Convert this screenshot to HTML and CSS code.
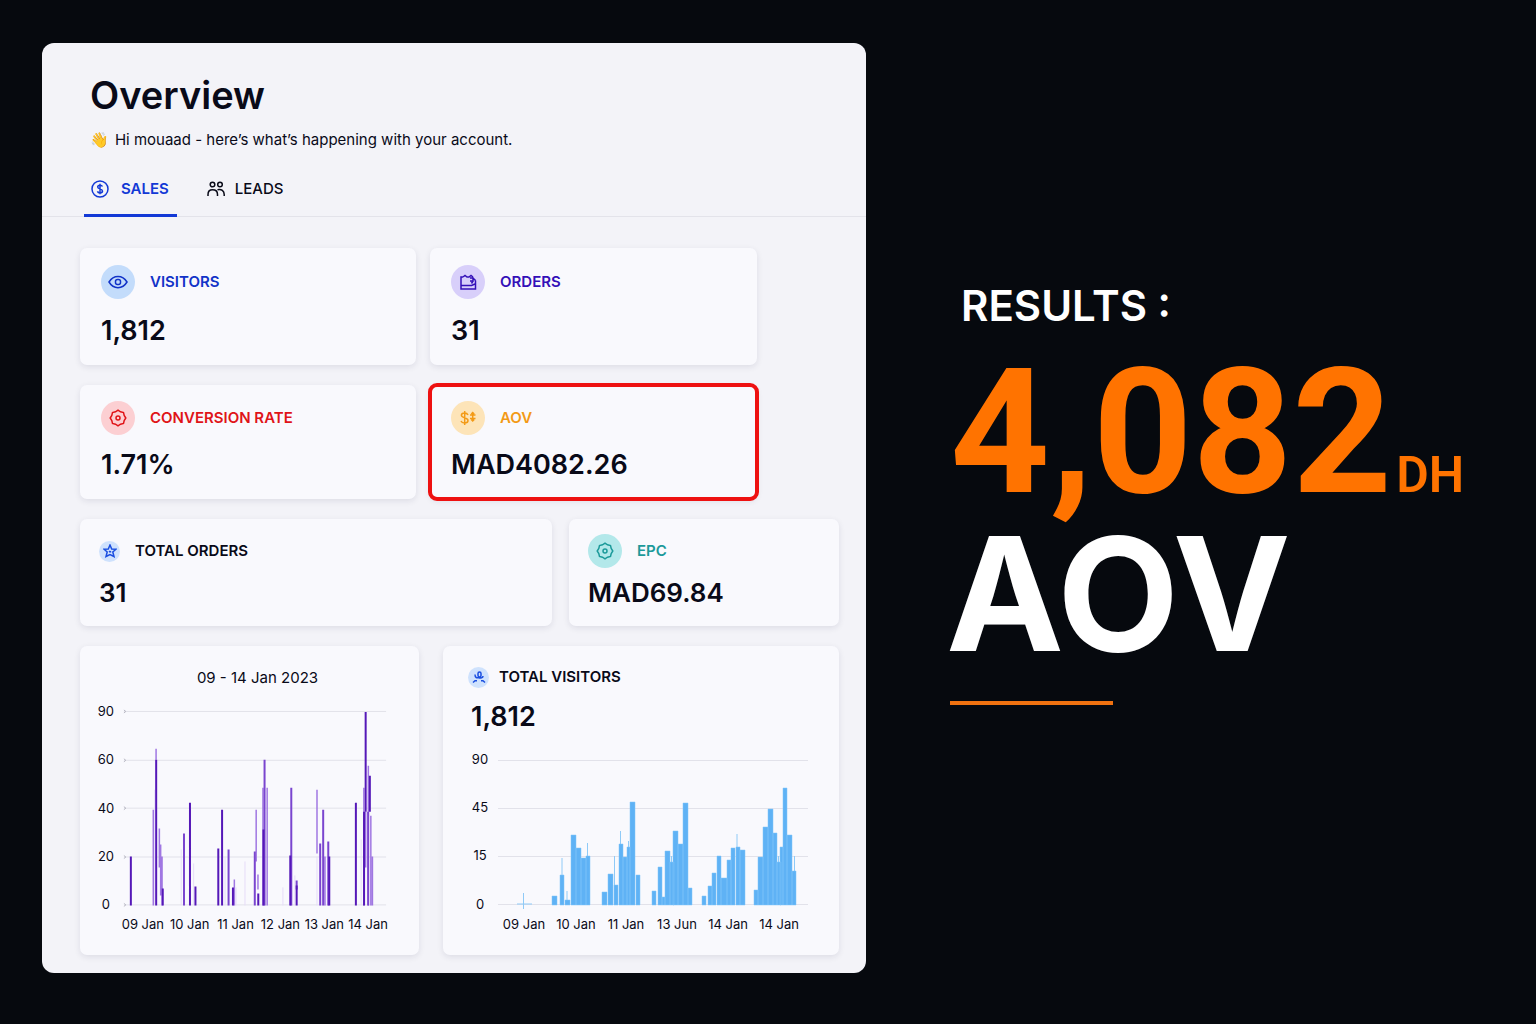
FILE: index.html
```html
<!DOCTYPE html>
<html lang="en">

<head>
    <meta charset="utf-8">
    <title>Overview</title>
    <link rel="stylesheet" href="styles.css">
</head>

<body>
    <main class="dashboard">
        <header class="dashboard-header">
            <h1>Overview</h1>
            <p class="greeting"><span class="wave">👋</span> Hi mouaad - here’s what’s happening with your account.</p>
        </header>

        <nav class="tabs">
            <button class="tab active" type="button">
                <svg width="18" height="18" viewBox="0 0 18 18">
                    <circle cx="9" cy="9" r="8" />
                    <path d="M11.5 6.5C11 5.5 10.2 5.200 9 5.200C7.600 5.200 6.700 5.900 6.700 7C6.700 9.500 11.500 8.300 11.500 11C11.500 12.200 10.500 12.900 9 12.900C7.700 12.900 6.800 12.300 6.400 11.400M9 3.700V14.300" />
                </svg>
                SALES
            </button>
            <button class="tab" type="button">
                <svg width="18" height="18" viewBox="0 0 18 18">
                    <circle cx="5.500" cy="4.500" r="2.300" />
                    <circle cx="13" cy="4.500" r="2.300" />
                    <path d="M1 16V14.500C1 11.500 2.800 9.800 5.500 9.800C8.500 9.800 10.500 11.500 10.500 14.500V16M10.500 9.800C14.500 8.800 17.200 11 17.200 14.500V16" />
                </svg>
                LEADS
            </button>
        </nav>

        <div class="content">
            <div class="row row-top">
                <section class="card">
                    <div class="card-head blue">
                        <span class="icon">
                            <svg width="20" height="14" viewBox="0 0 20 14">
                                <path d="M1 7C5.500 -0.500 14.500 -0.500 19 7C14.500 14.500 5.500 14.500 1 7Z" />
                                <rect x="7.500" y="4.500" width="5" height="5" rx="2" />
                            </svg>
                        </span>
                        <h2>VISITORS</h2>
                    </div>
                    <p class="value">1,812</p>
                </section>
                <section class="card">
                    <div class="card-head purple">
                        <span class="icon">
                            <svg width="18" height="18" viewBox="0 0 18 18">
                                <path d="M4 4H2V16H16.500V7.500M2 12.500H12.500L16 11M4 4L6 2.500L8 4H10L12 2.500L14 4M11 5H14V8H11M14 8L12.500 10.500M14 5L16.500 7.500" />
                            </svg>
                        </span>
                        <h2>ORDERS</h2>
                    </div>
                    <p class="value">31</p>
                </section>
            </div>

            <div class="row row-middle">
                <section class="card">
                    <div class="card-head red">
                        <span class="icon">
                            <svg width="18" height="18" viewBox="0 0 18 18">
                                <path d="M9 1.200L11.500 2.800L14.500 3.500L15.200 6.500L16.800 9L15.200 11.500L14.500 14.500L11.500 15.200L9 16.800L6.500 15.200L3.500 14.500L2.800 11.500L1.200 9L2.800 6.500L3.500 3.500L6.500 2.800Z" />
                                <circle cx="9" cy="9" r="2" />
                            </svg>
                        </span>
                        <h2>CONVERSION RATE</h2>
                    </div>
                    <p class="value">1.71%</p>
                </section>
                <section class="card highlighted">
                    <div class="card-head orange">
                        <span class="icon">
                            <svg width="18" height="18" viewBox="0 0 18 18">
                                <path d="M9 6C8.500 4.800 7.200 4 5.500 4C3.500 4 2.400 5 2.400 6.300C2.400 9.500 9 8 9 11.500C9 13 7.500 14 5.500 14C3.700 14 2.500 13.200 2 12M5.700 2V16M11 6H16.500M11 9.500H16.500M13.700 3.500V12M12.300 5L13.700 3.500L15.200 5M12.300 10.500L13.700 12L15.200 10.500" />
                            </svg>
                        </span>
                        <h2>AOV</h2>
                    </div>
                    <p class="value">MAD4082.26</p>
                </section>
            </div>

            <div class="row row-totals">
                <section class="card">
                    <div class="card-head dark">
                        <span class="icon icon-small">
                            <svg width="14" height="14" viewBox="0 0 14 14">
                                <path d="M7 1L8.700 5L13 5.200L9.800 8L11 12.500L7 10.500L3 12.500L4.200 8L1 5.200L5.300 5ZM6 7.200L7 8L8.200 7.500" />
                            </svg>
                        </span>
                        <h2>TOTAL ORDERS</h2>
                    </div>
                    <p class="value">31</p>
                </section>
                <section class="card">
                    <div class="card-head teal">
                        <span class="icon">
                            <svg width="18" height="18" viewBox="0 0 18 18">
                                <path d="M9 1.200L11.500 2.800L14.500 3.500L15.200 6.500L16.800 9L15.200 11.500L14.500 14.500L11.500 15.200L9 16.800L6.500 15.200L3.500 14.500L2.800 11.500L1.200 9L2.800 6.500L3.500 3.500L6.500 2.800Z" />
                                <circle cx="9" cy="9" r="2" />
                            </svg>
                        </span>
                        <h2>EPC</h2>
                    </div>
                    <p class="value">MAD69.84</p>
                </section>
            </div>

            <div class="row row-charts">
                <section class="card chart-card">
                    <p class="chart-title">09 - 14 Jan 2023</p>
                    <svg class="chart" viewBox="80 696 340 244">
                        <path class="grid" d="M124 711.500H387M124 760.500H387M124 808.500H387M124 857.500H387M124 905.500H387" />
                        <path class="tick" d="M124 710L126 711.500L124 713M124 759L126 760.500L124 762M124 807L126 808.500L124 810M124 856L126 857.500L124 859M124 904L126 905.500L124 907" />
                        <g class="axis">
                            <text x="106" y="716">90</text>
                            <text x="106" y="764">60</text>
                            <text x="106" y="813">40</text>
                            <text x="106" y="861">20</text>
                            <text x="106" y="910">0</text>
                            <text x="143" y="930">09 Jan</text>
                            <text x="190" y="930">10 Jan</text>
                            <text x="236" y="930">11 Jan</text>
                            <text x="281" y="930">12 Jan</text>
                            <text x="325" y="930">13 Jan</text>
                            <text x="369" y="930">14 Jan</text>
                        </g>
                        <path class="bar-faint" d="M155 906V790M181.500 906V850M194 906V864M225.500 906V857M236.500 906V888M245.500 906V862M283.500 906V888M295.500 906V876M317.700 906V857M362 906V840" />
                        <path class="bar-light" d="M153.500 906V810M156.300 760V749M159.600 868V829M160.900 896V845M162.300 906V857M234.800 906V880M256.700 862V810M258.500 890V875M263.500 906V788M267.700 906V788M317.700 854V790M325.700 906V857M364.700 906V788M366.500 868V812M369.200 906V766M371.700 906V816M373.300 906V857" />
                        <path class="bar-mid" d="M184.300 906V834M229 906V850M255.300 906V852M265.100 906V760M291.900 906V788M297.300 890V881M320.900 906V844M323.900 906V810M329 906V842M369 906V812" />
                        <path class="bar-dark" d="M131 906V857M156.400 906V760M163 906V889M190.300 906V803M195.800 906V887M218.700 906V849M222.500 906V810M233.400 906V888M258.800 906V894M264 906V830M290.900 906V856M297.300 906V886M330 906V857M356.700 906V803M364.900 906V812M366.500 812V712M370.700 812V776" />
                    </svg>
                </section>

                <section class="card chart-card visitors-card">
                    <div class="card-head dark">
                        <span class="icon icon-small">
                            <svg width="14" height="14" viewBox="0 0 14 14">
                                <path d="M6 5.500V3.500C6 1.500 9 1.500 9 3.500V5.500C9 7.500 6 7.500 6 5.500M3 4.500C3 8 5 8 6.500 7.500C8.500 8.500 11 8 11 6M1 12.500L3 10.800H5M9 10.800H11L13 12.500" />
                            </svg>
                        </span>
                        <h2>TOTAL VISITORS</h2>
                    </div>
                    <p class="value">1,812</p>
                    <svg class="chart" viewBox="443 740 396 200">
                        <path class="grid" d="M498 761.500H808M498 809.500H808M498 857.500H808M498 905.500H808" />
                        <g class="axis">
                            <text x="480" y="765">90</text>
                            <text x="480" y="813">45</text>
                            <text x="480" y="861">15</text>
                            <text x="480" y="910">0</text>
                            <text x="524" y="930">09 Jan</text>
                            <text x="576" y="930">10 Jan</text>
                            <text x="626" y="930">11 Jan</text>
                            <text x="677" y="930">13 Jun</text>
                            <text x="728" y="930">14 Jan</text>
                            <text x="779" y="930">14 Jan</text>
                        </g>
                        <path class="spike" d="M517 905H532M523.500 910V894M562 880V859M567 902V892M587.500 857V844M614.500 886V857M620.500 846V832M628.500 849V842M671.500 864V857M737 849V835M778.500 864V857M786.500 850V820M794.500 873V857" />
                        <path class="visits" d="M552 906V897H557V906ZM560 906V876H564V906ZM565 906V901H570V906ZM571 906V836H576V906ZM576 906V849H581V906ZM581 906V859H586V906ZM586 906V857H590V906Z
                            M602 906V893H607V906ZM608 906V875H613V906ZM614 906V886H618V906ZM619 906V845H623V906ZM623 906V858H627V906ZM627 906V848H630V906ZM630 906V803H635V906ZM636 906V876H640V906Z
                            M652 906V892H656V906ZM658 906V868H662V906ZM662 906V898H665V906ZM665 906V852H670V906ZM670 906V863H674V906ZM673 906V832H678V906ZM678 906V845H683V906ZM683 906V804H688V906ZM688 906V889H692V906Z
                            M702 906V897H706V906ZM708 906V887H712V906ZM712 906V874H716V906ZM717 906V857H721V906ZM721 906V879H727V906ZM727 906V861H731V906ZM731 906V849H735V906ZM736 906V848H740V906ZM740 906V851H745V906Z
                            M754 906V891H758V906ZM758 906V858H763V906ZM763 906V828H768V906ZM768 906V810H773V906ZM773 906V834H777V906ZM777 906V863H781V906ZM780 906V848H783V906ZM783 906V789H787V906ZM787 906V836H792V906ZM792 906V872H796V906Z" />
                    </svg>
                </section>
            </div>
        </div>
    </main>

    <aside class="results">
        <p class="results-label">RESULTS :</p>
        <p class="results-number">4,082 <span class="currency">DH</span></p>
        <p class="results-name">AOV</p>
        <div class="line"></div>
    </aside>
</body>

</html>
```
FILE: styles.css
```css
* {
    box-sizing: border-box;
}

body {
    margin: 0;
    padding: 43px 42px 50px;
    display: grid;
    grid-template-columns: minmax(0, 103fr) minmax(0, 68fr);
    gap: 84px;
    background-color: #06090e;
    color: #090a18;
    font-family: Inter, "Liberation Sans", sans-serif;
}

h1,
h2,
p {
    margin: 0;
}

svg {
    display: block;
    fill: none;
    stroke: currentColor;
    stroke-width: 1.5;
    flex: none;
}

.dashboard {
    background-color: #f3f3f8;
    border-radius: 12px;
    padding-bottom: 18px;
}

.dashboard-header {
    padding: 28px 48px 13px;
}

.dashboard-header h1 {
    font-size: 38px;
    font-weight: 600;
    line-height: 48px;
}

.greeting {
    margin-top: 9px;
    font-size: 15px;
    line-height: 24px;
}

.wave {
    margin-right: 2px;
    font-family: "Noto Color Emoji", Inter, sans-serif;
}

/* Tabs */
.tabs {
    display: flex;
    gap: 22px;
    padding-left: 42px;
    border-bottom: 1px solid #e3e3ea;
}

.tab {
    display: flex;
    align-items: center;
    gap: 10px;
    margin-bottom: -1px;
    padding: 12px 8px 13px;
    background: none;
    border: none;
    border-bottom: 3px solid transparent;
    color: #090a18;
    font-family: inherit;
    font-size: 15px;
    font-weight: 500;
    line-height: 24px;
    cursor: pointer;
}

.tab.active {
    gap: 12px;
    padding-left: 7px;
    color: #1238d6;
    font-weight: 600;
    border-bottom-color: #1238d6;
}

/* Cards */
.content {
    display: flex;
    flex-direction: column;
    gap: 20px;
    padding: 31px 27px 0 38px;
}

.row {
    display: grid;
}

.row-top,
.row-middle {
    grid-template-columns: 336fr 327fr;
    gap: 14px;
    padding-right: 82px;
}

.row-totals {
    grid-template-columns: 472fr 270fr;
    gap: 17px;
}

.row-charts {
    grid-template-columns: 339fr 396fr;
    gap: 24px;
}

.card {
    padding: 17px 21px 18px;
    background-color: #f9f9fd;
    border-radius: 7px;
    box-shadow: 0 2px 6px rgba(30, 30, 70, 0.1);
}

.row-middle .card {
    padding: 16px 21px 18px;
}

.row-totals .card {
    padding: 15px 19px 17px;
}

.card.highlighted {
    outline: 4px solid #ee1111;
    outline-offset: -2px;
}

.card-head {
    display: flex;
    align-items: center;
    gap: 15px;
    height: 34px;
}

.card-head h2 {
    font-size: 15px;
    font-weight: 600;
    line-height: 24px;
}

.icon {
    display: flex;
    align-items: center;
    justify-content: center;
    width: 34px;
    height: 34px;
    border-radius: 50%;
}

.icon-small {
    width: 21px;
    height: 21px;
    background-color: #cfe2fd;
    color: #1a4ee0;
}

.blue { color: #1233c8; }
.blue .icon { background-color: #c3dcfb; }

.purple { color: #3410b8; }
.purple .icon { background-color: #d8cffa; }

.red { color: #e01418; }
.red .icon { background-color: #fccfd2; }

.orange { color: #f39a16; }
.orange .icon { background-color: #fde4b8; }

.teal { color: #1c9a9a; }
.teal .icon { background-color: #b3e8ea; }

.value {
    margin-top: 16px;
    font-size: 27px;
    font-weight: 600;
    line-height: 32px;
}

.row-middle .value {
    margin-top: 14px;
}

.row-totals .value {
    margin-top: 9px;
    font-size: 26px;
}

/* Charts */
.row-charts .chart-card {
    padding: 20px 0 16px;
}

.chart-title {
    font-size: 15px;
    line-height: 24px;
    padding-left: 16px;
    text-align: center;
}

.visitors-card .card-head {
    height: 22px;
    gap: 10px;
    padding-left: 25px;
}

.visitors-card .value {
    margin-top: 13px;
    padding-left: 28px;
}

.chart {
    width: 100%;
    margin-top: 6px;
}

.axis {
    fill: #090a18;
    stroke: none;
    font-size: 13px;
    text-anchor: middle;
}

.grid {
    stroke: #e2e2ea;
    stroke-width: 1;
}

.tick {
    stroke: #b9b9c4;
    stroke-width: 1;
}

.bar-faint {
    stroke: #e6dcf8;
    stroke-width: 1;
}

.bar-light {
    stroke: #a077e2;
    stroke-width: 1.5;
}

.bar-mid {
    stroke: #7a45cf;
    stroke-width: 2;
}

.bar-dark {
    stroke: #5518b8;
    stroke-width: 2;
}

.spike {
    stroke: #8fcaf7;
    stroke-width: 1;
}

.visits {
    fill: #5fb2f5;
    stroke: #83c6fa;
    stroke-width: 0.5;
}

/* Results */
.results {
    padding-top: 237px;
    color: #ffffff;
    white-space: nowrap;
}

.results-label {
    padding-left: 11px;
    font-size: 42px;
    font-weight: 600;
    line-height: 52px;
}

.results-number {
    display: flex;
    align-items: baseline;
    gap: 4px;
    margin-top: 21px;
    color: #ff7300;
    font-family: Roboto, "Liberation Sans", sans-serif;
    font-size: 174px;
    font-weight: 700;
    line-height: 160px;
}

.currency {
    font-size: 50px;
    font-weight: 600;
    line-height: 60px;
}

.results-name {
    margin-top: 6px;
    margin-left: -4px;
    font-size: 158px;
    font-weight: 700;
    line-height: 150px;
}

.line {
    width: 163px;
    height: 4px;
    margin-top: 32px;
    background-color: #f07210;
}
```
